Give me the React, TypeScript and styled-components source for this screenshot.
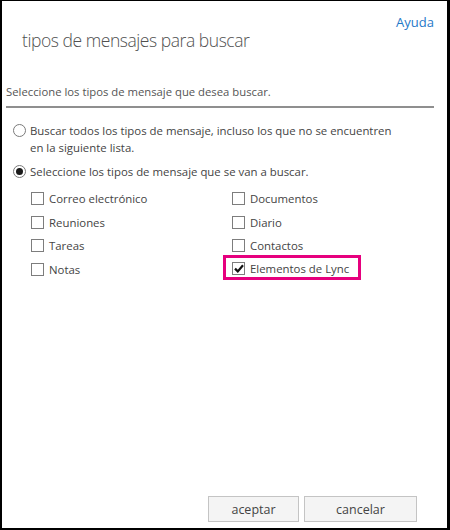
import styled, { createGlobalStyle } from "styled-components";

const GlobalStyle = createGlobalStyle`
    html, body {
        margin: 0;
        padding: 0;
        background: #ffffff;
    }
    body {
        font-family: "Open Sans", "Noto Sans", Arial, sans-serif;
        color: #444444;
    }
`;

const Dialog = styled.div`
    box-sizing: border-box;
    width: 450px;
    height: 530px;
    border-style: solid;
    border-color: #000000;
    border-width: 1px 3px 2px 2px;
    background: #ffffff;
    display: flex;
    flex-direction: column;
    padding: 0 13px 6px 4px;
`;

const Header = styled.div`
    display: flex;
    flex-direction: column;
`;

const HelpLink = styled.a`
    align-self: flex-end;
    margin-top: 12px;
    font-size: 13px;
    color: #1f78c8;
    text-decoration: none;
    line-height: 18px;
`;

const Title = styled.h1`
    margin: -4px 0 0 16px;
    font-size: 17.5px;
    font-weight: 300;
    letter-spacing: -0.45px;
    color: #505050;
    line-height: 26px;
`;

const Intro = styled.p`
    margin: 30px 0 0 0;
    font-size: 11.3px;
    line-height: 18px;
    color: #555555;
    padding-bottom: 5px;
    border-bottom: 2px solid #8f8f8f;
`;

const Options = styled.div`
    display: flex;
    flex-direction: column;
    gap: 7px;
    margin: 14px 0 0 7px;
`;

const RadioRow = styled.label`
    display: flex;
    align-items: flex-start;
    gap: 4px;
    font-size: 11.4px;
    line-height: 17px;
    color: #444444;
`;

const RadioDot = styled.span<{ $checked?: boolean }>`
    flex: none;
    box-sizing: border-box;
    width: 13px;
    height: 13px;
    margin-top: 2px;
    border-radius: 50%;
    border: 1px solid #7a7a7a;
    display: flex;
    align-items: center;
    justify-content: center;
    &::after {
        content: "";
        width: 7px;
        height: 7px;
        border-radius: 50%;
        background: ${(p) => (p.$checked ? "#1a1a1a" : "transparent")};
    }
`;

const TypeGrid = styled.div`
    display: grid;
    grid-template-columns: 201px 1fr;
    row-gap: 5.5px;
    margin: 9.5px 0 0 25px;
`;

const TypeItem = styled.label<{ $highlight?: boolean }>`
    box-sizing: border-box;
    display: flex;
    align-items: center;
    gap: 5px;
    height: 18px;
    font-size: 11.4px;
    color: #444444;
    ${(p) =>
        p.$highlight &&
        `
        justify-self: start;
        height: 25px;
        margin: -5px 0 -2px -9px;
        padding: 2px 9px 0 6px;
        border: 3px solid #e6007e;
    `}
`;

const Box = styled.span`
    flex: none;
    box-sizing: border-box;
    width: 13px;
    height: 13px;
    border: 1px solid #7d7d7d;
    background: #ffffff;
    display: flex;
    align-items: center;
    justify-content: center;
`;

const Footer = styled.div`
    margin-top: auto;
    padding-right: 17px;
    display: flex;
    justify-content: flex-end;
    gap: 5px;
`;

const Button = styled.button<{ $width: number }>`
    box-sizing: border-box;
    width: ${(p) => p.$width}px;
    height: 26px;
    border: 1px solid #c4c4c4;
    background: #f4f4f4;
    font-family: inherit;
    font-size: 12.5px;
    color: #444444;
    padding: 0;
`;

const CheckMark = () => (
    <svg width="10" height="9" viewBox="0 0 10 9">
        <path d="M1 4.6 L3.8 7.4 L9 1.2" stroke="#111" strokeWidth="2.2" fill="none" />
    </svg>
);

const types: { label: string; checked?: boolean }[] = [
    { label: "Correo electrónico" },
    { label: "Documentos" },
    { label: "Reuniones" },
    { label: "Diario" },
    { label: "Tareas" },
    { label: "Contactos" },
    { label: "Notas" },
    { label: "Elementos de Lync", checked: true },
];

const App = () => {
    return (
        <>
            <GlobalStyle />
            <Dialog>
                <Header>
                    <HelpLink href="#">Ayuda</HelpLink>
                    <Title>tipos de mensajes para buscar</Title>
                </Header>
                <Intro>Seleccione los tipos de mensaje que desea buscar.</Intro>
                <Options>
                    <RadioRow>
                        <RadioDot />
                        <span>
                            Buscar todos los tipos de mensaje, incluso los que no se encuentren
                            <br />
                            en la siguiente lista.
                        </span>
                    </RadioRow>
                    <RadioRow>
                        <RadioDot $checked />
                        <span>Seleccione los tipos de mensaje que se van a buscar.</span>
                    </RadioRow>
                </Options>
                <TypeGrid>
                    {types.map((t) => (
                        <TypeItem key={t.label} $highlight={t.checked}>
                            <Box>{t.checked && <CheckMark />}</Box>
                            {t.label}
                        </TypeItem>
                    ))}
                </TypeGrid>
                <Footer>
                    <Button $width={91}>aceptar</Button>
                    <Button $width={113}>cancelar</Button>
                </Footer>
            </Dialog>
        </>
    );
};

export default App;
